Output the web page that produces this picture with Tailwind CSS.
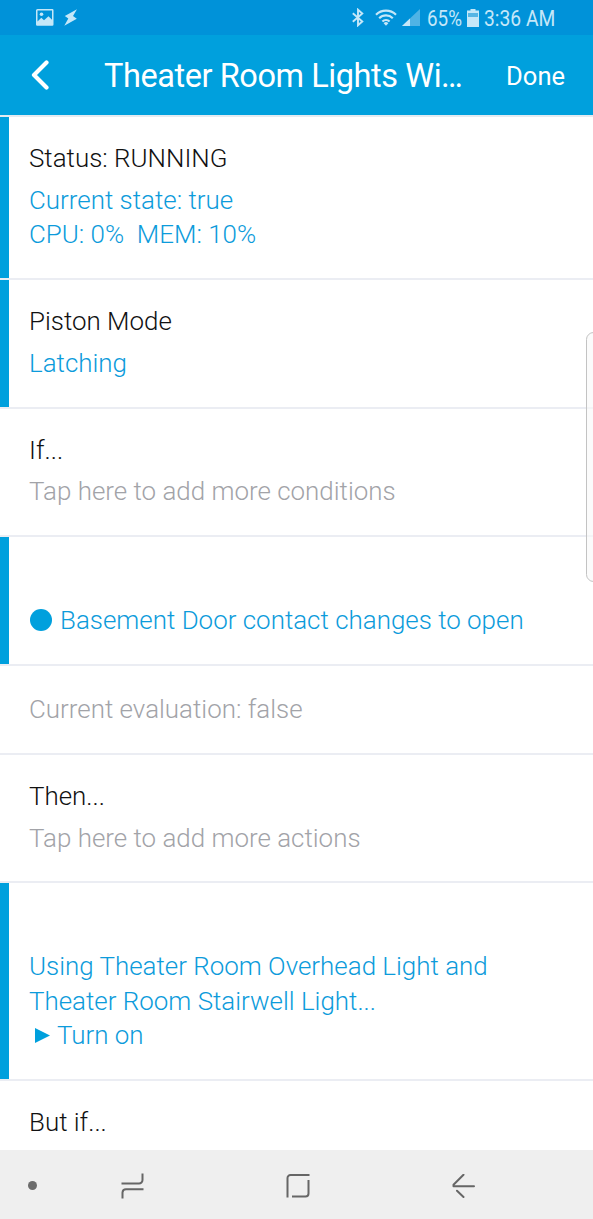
<!DOCTYPE html>
<html lang="en">
<head>
  <meta charset="UTF-8" />
  <title>Theater Room Lights</title>
  <meta name="viewport" content="width=device-width, initial-scale=1.0" />
  <script src="https://cdn.jsdelivr.net/npm/@tailwindcss/browser@4"></script>
</head>
<body class="relative flex flex-col h-[1219px] overflow-hidden bg-white font-[Roboto,sans-serif] text-[25.930px] font-light text-[#111111]">

  <!-- Status bar -->
  <div class="flex shrink-0 items-center justify-between h-[35px] pl-9 pr-[38px] bg-[#0092d9] text-[#c5e7f8]">
    <div class="flex items-center gap-[10px]">
      <svg class="w-[18px] h-[17px]" viewBox="0 0 18 17" fill="currentColor">
        <path fill-rule="evenodd" d="M1.500 0h14.800a1.200 1.200 0 0 1 1.200 1.200v14.300a1.200 1.200 0 0 1-1.200 1.200H1.200A1.200 1.200 0 0 1 0 15.500V1.500A1.500 1.500 0 0 1 1.500 0zM1.500 1.500v11l3.800-3.800 2.700 2.600 4.500-4 3.500 3.500V1.500z" />
        <circle cx="5.500" cy="5.300" r="1.800" />
      </svg>
      <svg class="w-[14px] h-[17px]" viewBox="0 0 14 17" fill="currentColor">
        <path d="M13 .2.800 7l3.500 2.500L.300 16.800 12.800 9.800 9 7z" />
      </svg>
    </div>
    <div class="flex items-center">
      <svg class="w-3 h-[19px]" viewBox="0 0 12 19" fill="none" stroke="currentColor" stroke-width="1.900">
        <path d="M.8 5.200 10.300 13.500 6 17.300V1.700l4.300 3.800L.8 13.800" />
      </svg>
      <svg class="w-[22px] h-[17px] ml-[11px]" viewBox="0 0 22 17" fill="none" stroke="currentColor" stroke-width="2.200">
        <path d="M1 5.700a14.300 14.300 0 0 1 20 0M4.200 9.200a9.700 9.700 0 0 1 13.600 0M7.400 12.500a5.200 5.200 0 0 1 7.200 0" />
        <path d="M8.600 14.200a3.300 3.300 0 0 1 4.800 0L11 16.800z" fill="currentColor" stroke="none" />
      </svg>
      <svg class="w-[18px] h-[17px] ml-[5px]" viewBox="0 0 18 17" fill="currentColor">
        <path d="M18 0v17H0z" opacity=".4" />
        <path d="M8 9.400V17H0z" />
      </svg>
      <span class="ml-[7px] w-[35px] pt-px text-[22px] font-normal whitespace-nowrap"><span class="inline-block origin-left scale-x-[0.855]">65%</span></span>
      <svg class="w-3 h-[18px] ml-[5px]" viewBox="0 0 12 18" fill="currentColor">
        <path d="M3.500 0h5v1.500H12V18H0V1.500h3.500z" />
        <path d="M1 4h10v4H1z" fill="#56b5e4" />
      </svg>
      <span class="ml-[5px] w-[71px] pt-px text-[22px] font-normal whitespace-nowrap"><span class="inline-block origin-left scale-x-[0.875]">3:36 AM</span></span>
    </div>
  </div>

  <!-- Header -->
  <header class="flex shrink-0 items-center h-20 pl-[30px] pr-7 bg-[#00a0dd] text-white font-normal">
    <svg class="w-5 h-[30px]" viewBox="0 0 20 30" fill="none" stroke="currentColor" stroke-width="4.200" stroke-linecap="round" stroke-linejoin="round">
      <path d="M16.500 2.500 4 15l12.500 12.500" />
    </svg>
    <h1 class="ml-[54px] pt-0.5 text-[32.500px] tracking-[-0.430px] whitespace-nowrap">Theater Room Lights Wi…</h1>
    <button class="ml-auto pt-[3px] text-[25.500px]">Done</button>
  </header>

  <!-- Piston settings -->
  <main class="flex-1 overflow-hidden border-t-2 border-[#e4ebf1]">
    <section class="h-[163px] border-b-2 border-[#ebedf3]">
      <div class="h-full border-l-[9px] border-[#00a0dd] pt-6 pl-5">
        <h2 class="leading-[34px]">Status: RUNNING</h2>
        <p class="mt-2 leading-[34px] text-[#0c9bdb] whitespace-pre">Current state: true
CPU: 0%  MEM: 10%</p>
      </div>
    </section>
    <section class="h-[129px] border-b-2 border-[#ebedf3]">
      <div class="h-full border-l-[9px] border-[#00a0dd] pt-6 pl-5">
        <h2 class="leading-[34px]">Piston Mode</h2>
        <p class="mt-2 leading-[34.600px] text-[#0c9bdb]">Latching</p>
      </div>
    </section>
    <section class="h-32 border-b-2 border-[#ebedf3] pt-6 pl-[29px]">
      <h2 class="leading-[34px]">If...</h2>
      <p class="mt-[7px] leading-[34.600px] text-[#a2a3a8]">Tap here to add more conditions</p>
    </section>
    <section class="h-[129px] border-b-2 border-[#ebedf3]">
      <div class="h-full border-l-[9px] border-[#00a0dd] pt-[66px] pl-5">
        <p class="flex items-center leading-[34.600px] text-[#0c9bdb]">
          <span class="size-[22px] ml-px mr-2 rounded-full bg-[#00a0dd]"></span>
          <span>Basement Door contact changes to open</span>
        </p>
      </div>
    </section>
    <section class="h-[89px] border-b-2 border-[#ebedf3] pt-[26px] pl-[29px]">
      <p class="leading-[34px] text-[#a2a3a8]">Current evaluation: false</p>
    </section>
    <section class="h-32 border-b-2 border-[#ebedf3] pt-6 pl-[29px]">
      <h2 class="leading-[34px]">Then...</h2>
      <p class="mt-2 leading-[34.600px] text-[#a2a3a8]">Tap here to add more actions</p>
    </section>
    <section class="h-[198px] border-b-2 border-[#ebedf3]">
      <div class="h-full border-l-[9px] border-[#00a0dd] pt-[66px] pl-5 leading-[34.600px] text-[#0c9bdb]">
        <p>Using Theater Room Overhead Light and<br />Theater Room Stairwell Light...</p>
        <p class="flex items-center">
          <svg class="w-[15px] h-[15px] ml-[6px] mr-[7px]" viewBox="0 0 15 15" fill="#00a0dd"><path d="M0 0l15 7.500L0 15z" /></svg>
          <span>Turn on</span>
        </p>
      </div>
    </section>
    <section class="pt-6 pl-[29px]">
      <h2 class="leading-[34px]">But if...</h2>
    </section>
  </main>

  <!-- Edge panel handle -->
  <div class="absolute top-[332px] -right-2 w-[15px] h-[250px] rounded-[8px] border border-[#c3c3c3] bg-[#f9f9f9]/60"></div>

  <!-- Navigation bar -->
  <nav class="flex shrink-0 items-center h-[69px] pl-7 pt-0.5 bg-[#efefef] text-[#666666]">
    <span class="size-[9px] rounded-full bg-[#6c6c6c]"></span>
    <svg class="w-6 h-[26px] ml-[84px]" viewBox="0 0 24 26" fill="none" stroke="currentColor" stroke-width="2">
      <path d="M.5 10.500H18a3.500 3.500 0 0 0 3.500-3.500V.500M1.500 25.500V19.500A3.500 3.500 0 0 1 5 16.300h17.500" />
    </svg>
    <svg class="w-6 h-6 ml-[141px]" viewBox="0 0 24 24" fill="none" stroke="currentColor" stroke-width="2">
      <path d="M1.500 23.500V4A3 3 0 0 1 4.500 1h19M22.500 6v13.500a3 3 0 0 1-3 3H6" />
    </svg>
    <svg class="w-6 h-6 ml-[142px]" viewBox="0 0 24 24" fill="none" stroke="currentColor" stroke-width="2" stroke-linecap="round" stroke-linejoin="round">
      <path d="M11.500.8 1.500 10.800v1.500H22M5 16.800l6.500 6.200" />
    </svg>
  </nav>

</body>
</html>
